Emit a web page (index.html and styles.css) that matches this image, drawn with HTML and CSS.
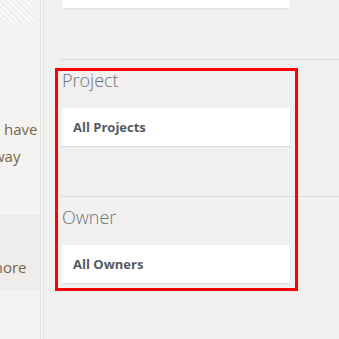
FILE: index.html
```html
<!DOCTYPE html>
<html lang="en">
  <head>
    <meta charset="UTF-8" />
    <meta name="viewport" content="width=device-width, initial-scale=1.0" />
    <title>Filters</title>
    <link rel="stylesheet" href="styles.css">
  </head>
  <body>
    <aside class="sidebar">
      <div class="stripes"></div>
      <p class="intro">
        <span class="line line-have">have</span>
        <span class="line line-way">way</span>
      </p>
      <div class="more-band">
        <span class="line line-more">more</span>
      </div>
    </aside>

    <main class="filters">
      <div class="top-card"></div>

      <section class="filter">
        <h2 class="filter-label">Project</h2>
        <div class="filter-select">All Projects</div>
      </section>

      <section class="filter">
        <h2 class="filter-label">Owner</h2>
        <div class="filter-select">All Owners</div>
      </section>
    </main>

    <!-- highlight frame drawn over the filter group -->
    <div class="highlight"></div>
  </body>
</html>
```

FILE: styles.css
```css
/* Basic styles */
body {
  font-family: "Open Sans", "Liberation Sans", sans-serif;
  background-color: #f2f0ee;
  display: flex;
  width: 339px;
  height: 339px;
  margin: 0;
  overflow: hidden;
  position: relative;
}

/* Left column, clipped */
.sidebar {
  width: 40px;
  flex: none;
  background-color: #f4f3f1;
  border-right: 1px solid #e4e2df;
  overflow: hidden;
}

.stripes {
  width: 34px;
  height: 22px;
  background: repeating-linear-gradient(
    45deg,
    rgba(255, 255, 255, 0.9) 0 2px,
    rgba(225, 223, 220, 0.35) 2px 4px
  );
  opacity: 0.6;
}

.intro {
  margin: 94px 0 0;
}

.line {
  display: block;
  white-space: nowrap;
  font-size: 15px;
  line-height: 27px;
  color: #7a6548;
}

.line-have {
  text-indent: 4px;
}

.line-way {
  text-indent: -7px;
}

.more-band {
  margin-top: 43px;
  padding: 40px 0 9px;
  background-color: #eeedeb;
  border-top: 1px solid #f7f6f5;
}

.line-more {
  text-indent: -11px;
}

/* Main filter column */
.filters {
  flex: 1;
  padding-left: 19px;
  box-shadow: inset 2px 0 0 #f8f7f6, inset 3px 0 0 #e7e5e3;
}

.top-card {
  height: 8px;
  margin: 0 49px 51px 2px;
  background-color: #ffffff;
  box-shadow: 0 1px 2px rgba(0, 0, 0, 0.08);
}

.filter {
  border-top: 1px solid #dddbd8;
  padding: 8px 49px 50px 2px;
}

.filter-label {
  margin: 0 0 16px;
  font-size: 18px;
  font-weight: 300;
  line-height: 24px;
  color: #6b737e;
}

.filter-select {
  height: 38px;
  padding: 0 11px;
  display: flex;
  align-items: center;
  background-color: #ffffff;
  box-shadow: 0 1px 1px rgba(0, 0, 0, 0.07);
  font-size: 13px;
  font-weight: 700;
  color: #555a60;
}

.highlight {
  position: absolute;
  left: 55px;
  top: 68px;
  width: 243px;
  height: 223px;
  box-sizing: border-box;
  border: 3px solid #ff0000;
  pointer-events: none;
}
```
